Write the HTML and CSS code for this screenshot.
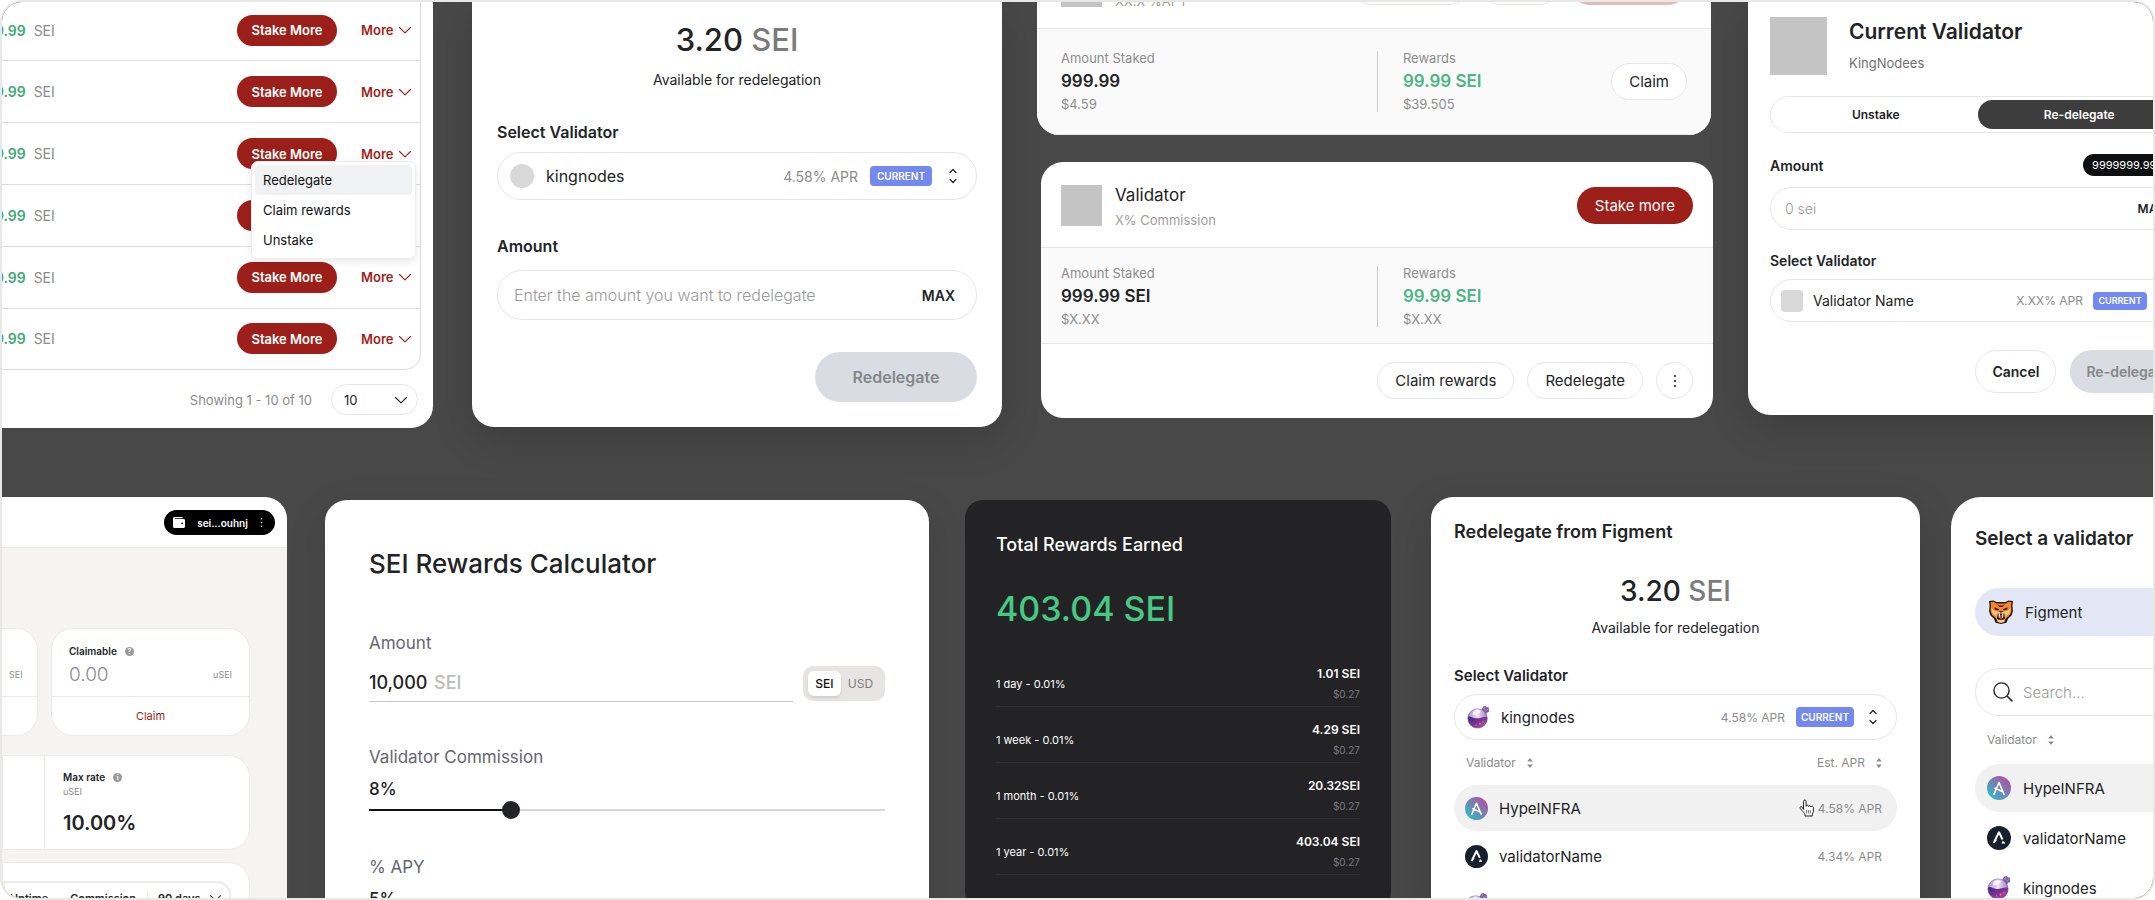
FILE: index.html
```html
<!DOCTYPE html>
<html lang="en">
<head>
<meta charset="utf-8">
<title>SEI staking components</title>
<link rel="stylesheet" href="styles.css">
</head>
<body>
<svg class="sprite" aria-hidden="true">
  <defs>
    <linearGradient id="g-hype" x1="0" y1="1" x2="1" y2="0"><stop offset=".1" stop-color="#2fbcc8"/><stop offset="1" stop-color="#c43f98"/></linearGradient>
    <linearGradient id="g-glass" x1="0" y1="0" x2="1" y2="0"><stop offset="0" stop-color="#a78bc4"/><stop offset=".5" stop-color="#efe6f4"/><stop offset="1" stop-color="#9a7bb8"/></linearGradient>
    <linearGradient id="g-liquid" x1="0" y1="0" x2="1" y2="1"><stop offset="0" stop-color="#3c2a86"/><stop offset=".5" stop-color="#7d3293"/><stop offset="1" stop-color="#cf4f8f"/></linearGradient>
  </defs>
  <symbol id="chevron" viewBox="0 0 12 8"><path d="M.5 1.500 6 6.800l5.500-5.300" fill="none" stroke="currentColor" stroke-width="1.100" stroke-linecap="round" stroke-linejoin="round"/></symbol>
  <symbol id="updown" viewBox="0 0 8 16"><path d="M1 4.500 4 1.500l3 3M1 11.500l3 3 3-3" fill="none" stroke="currentColor" stroke-width="1.200" stroke-linecap="round" stroke-linejoin="round"/></symbol>
  <symbol id="sort" viewBox="0 0 6 10"><path d="M3 0 5.800 3.400H.2zM3 10 .2 6.600h5.600z" fill="currentColor"/></symbol>
  <symbol id="dots" viewBox="0 0 4 14"><g fill="currentColor"><circle cx="2" cy="2" r="1.100"/><circle cx="2" cy="7" r="1.100"/><circle cx="2" cy="12" r="1.100"/></g></symbol>
  <symbol id="wallet" viewBox="0 0 12 11"><path d="M1.600 0h8v1.200H1.800v.7h8.800A1.400 1.400 0 0 1 12 3.300v6.200A1.400 1.400 0 0 1 10.600 11H1.500A1.500 1.500 0 0 1 0 9.500v-8A1.500 1.500 0 0 1 1.600 0z" fill="#fff"/><circle cx="9.100" cy="6.300" r=".9" fill="#000"/></symbol>
  <symbol id="kingnodes" viewBox="0 0 24 24">
    <path d="m15.500 7 3-3.500" stroke="#6b4a8f" stroke-width="3"/>
    <path d="m17 .6 2.700-.5 1.100 1.300 2.200.2-.2 2.200.7 1.800-2.200 1.200-1.400 1.600-2.600-1.600-2.100-1.800.4-2z" fill="#7c58a5"/>
    <path d="m17.200 2.300 3.500 2.500m-1.800-4-1 2.500m4.300-.2-2 1.900" stroke="#b99ad3" stroke-width=".8"/>
    <circle cx="11" cy="13" r="10.300" fill="url(#g-glass)"/>
    <path d="M1.200 11.300c2.800-1.200 4.600 1.500 8.500 1.600 4 .2 7-2.200 11.300-1.200a10 10 0 1 1-19.800-.4z" fill="url(#g-liquid)"/>
    <path d="M6.500 6.200c2-2 5.500-2.600 7.800-1-1.300 3.200-5.500 4.500-8.500 4z" fill="#fff" opacity=".7"/>
    <g fill="#ef80b0"><circle cx="13.500" cy="18.500" r=".9"/><circle cx="16.800" cy="16.700" r=".7"/><circle cx="9.500" cy="20" r=".7"/></g>
    <circle cx="11" cy="13" r="10.100" fill="none" stroke="#6f4b94" stroke-width=".5"/>
  </symbol>
  <symbol id="hype" viewBox="0 0 24 24"><circle cx="12" cy="12" r="12" fill="url(#g-hype)"/><path d="M7 18.300 12 6.500l5 11.800M8.200 12.200l7 3.300" fill="none" stroke="#fff" stroke-width="1.600" stroke-linecap="round" stroke-linejoin="round"/></symbol>
  <symbol id="dark" viewBox="0 0 24 24"><circle cx="12" cy="12" r="12" fill="#19202d"/><path d="M6.800 16.800 12 6.300l3.500 7.200" fill="none" stroke="#fff" stroke-width="2" stroke-linejoin="round"/><path d="M6.800 16.800 9.500 14M15.500 15.200l2.300 1.900h-3" fill="#fff" stroke="#fff" stroke-width="1"/></symbol>
  <symbol id="tiger" viewBox="0 0 24 24">
    <path d="M0 1 4.500.5 7.500 2h9l3-1.500L24 1l-.6 5 .6 5-1.500 4.500-3.500 3.200-1.500 4-5.500 1.300-5.500-1.300-1.500-4-3.500-3.200L0 11l.6-5z" fill="#26180f"/>
    <path d="M1.500 2.300 4.500 1.800l2.600 1.700h9.800l2.600-1.700 3 .5-.5 4 .5 4.500-1.400 4-4 3.500H6.900l-4-3.500-1.400-4 .5-4.500z" fill="#f5842c"/>
    <path d="m2 8 3.800 3 3.200.5L7 16l-3.500-2.500zM22 8l-3.800 3-3.200.5 2 4.500 3.500-2.500zM7.200 18l1.300-6h7l1.300 6-1.500 4-3.300.9L8.700 22z" fill="#f8c878"/>
    <path d="M5.500 7.300 10 9.200l-.7 1.300-3.600-1zM18.500 7.300 14 9.200l.7 1.300 3.600-1zM8 4.300l3 1.200h2l3-1.200-2.800 2.700h-2.400zM10 11h4l-1.200 1.600h-1.600z" fill="#3a1d10"/>
    <path d="M8.700 13.500h6.600l.7 5.500-2 .8h-4l-2-.8z" fill="#321010"/>
    <path d="M9.500 13.500h1.700l-.6 4.500h-.7zM14.500 13.500h-1.700l.6 4.500h.7z" fill="#fff"/><path d="M11 15h2v4h-2z" fill="#c83a35"/>
  </symbol>
  <symbol id="search" viewBox="0 0 20 20"><circle cx="8.500" cy="8.500" r="7.600" fill="none" stroke="currentColor" stroke-width="1.400"/><path d="m14 14 5.400 5.400" stroke="currentColor" stroke-width="1.500"/></symbol>
  <symbol id="hand" viewBox="0 0 16 18"><path d="M4.600 10.500V2.300a1.250 1.250 0 0 1 2.500 0v5c0-1.500 2.400-1.500 2.500.2.300-1.300 2.300-1.100 2.400.5.400-1.200 2.300-1 2.400.5v3.700c0 1.200-.9 2-1.100 3.300v1.500H6v-1.300c-.3-1.600-2-2.800-3-4.200L1.200 9.300c-.8-1.300.9-2.100 1.900-1.100z" fill="#fff" stroke="#222" stroke-width="1" stroke-linejoin="round"/><path d="M7.600 11v3.500M9.400 11v3.500M11.200 11v3.500" stroke="#555" stroke-width=".8"/></symbol>
</svg>

<main class="frame">
  <div class="row row-top">

    <section class="card stakes">
      <div class="stakes-table">
        <table>
          <tbody>
            <tr><td><b>999.99</b> <span>SEI</span></td><td><div class="actions"><button class="btn-red">Stake More</button><button class="more">More <svg><use href="#chevron"/></svg></button></div></td></tr>
            <tr><td><b>999.99</b> <span>SEI</span></td><td><div class="actions"><button class="btn-red">Stake More</button><button class="more">More <svg><use href="#chevron"/></svg></button></div></td></tr>
            <tr><td><b>999.99</b> <span>SEI</span></td><td><div class="actions"><button class="btn-red">Stake More</button><button class="more">More <svg><use href="#chevron"/></svg></button>
              <div class="menu" role="menu"><button class="active" role="menuitem">Redelegate</button><button role="menuitem">Claim rewards</button><button role="menuitem">Unstake</button></div></div></td></tr>
            <tr><td><b>999.99</b> <span>SEI</span></td><td><div class="actions"><button class="btn-red" aria-label="Stake More"></button><button class="more" aria-label="More"></button></div></td></tr>
            <tr><td><b>999.99</b> <span>SEI</span></td><td><div class="actions"><button class="btn-red">Stake More</button><button class="more">More <svg><use href="#chevron"/></svg></button></div></td></tr>
            <tr><td><b>999.99</b> <span>SEI</span></td><td><div class="actions"><button class="btn-red">Stake More</button><button class="more">More <svg><use href="#chevron"/></svg></button></div></td></tr>
          </tbody>
        </table>
      </div>
      <div class="pager">
        <label for="page-size">Showing 1 - 10 of 10</label>
        <span class="select-wrap"><select id="page-size"><option>10</option><option>20</option></select><svg><use href="#chevron"/></svg></span>
      </div>
    </section>

    <section class="card redelegate">
      <p class="balance">3.20 <span>SEI</span></p>
      <p class="balance-note">Available for redelegation</p>
      <h3>Select Validator</h3>
      <button class="picker"><i class="dot"></i><span class="name">kingnodes</span><span class="apr">4.58% APR</span><span class="badge">CURRENT</span><svg class="updown"><use href="#updown"/></svg></button>
      <label class="label" for="amount-a">Amount</label>
      <div class="field"><input id="amount-a" type="text" placeholder="Enter the amount you want to redelegate"><button>MAX</button></div>
      <button class="btn-disabled" disabled>Redelegate</button>
    </section>

    <div class="positions">
      <section class="card position position-a">
        <header>
          <i class="avatar"></i>
          <div><h4>Validator</h4><p>XX.X %APY</p></div>
          <div class="buttons"><button class="btn-line">Redelegate</button><button class="btn-line">Claim</button><button class="btn-red faded">Stake more</button></div>
        </header>
        <div class="stats">
          <dl><dt>Amount Staked</dt><dd class="value">999.99</dd><dd>$4.59</dd></dl>
          <dl class="rewards"><dt>Rewards</dt><dd class="value">99.99 SEI</dd><dd>$39.505</dd></dl>
          <button class="btn-line">Claim</button>
        </div>
      </section>
      <section class="card position position-b">
        <header>
          <i class="avatar"></i>
          <div><h4>Validator</h4><p>X% Commission</p></div>
          <div class="buttons"><button class="btn-red">Stake more</button></div>
        </header>
        <div class="stats">
          <dl><dt>Amount Staked</dt><dd class="value">999.99 SEI</dd><dd>$X.XX</dd></dl>
          <dl class="rewards"><dt>Rewards</dt><dd class="value">99.99 SEI</dd><dd>$X.XX</dd></dl>
        </div>
        <footer><button class="btn-line">Claim rewards</button><button class="btn-line">Redelegate</button><button class="btn-line round" aria-label="More options"><svg><use href="#dots"/></svg></button></footer>
      </section>
    </div>

    <section class="card manage">
      <header><i class="avatar"></i><div><h2>Current Validator</h2><p>KingNodees</p></div></header>
      <div class="tabs" role="tablist"><button role="tab">Unstake</button><button role="tab" class="active" aria-selected="true">Re-delegate</button></div>
      <div class="label-row"><label for="amount-b">Amount</label><span class="pill">9999999.99 SEI</span></div>
      <div class="field"><input id="amount-b" type="text" placeholder="0 sei"><button>MAX</button></div>
      <h3>Select Validator</h3>
      <button class="picker"><i class="dot"></i><span class="name">Validator Name</span><span class="apr">X.XX% APR</span><span class="badge">CURRENT</span><svg class="updown"><use href="#updown"/></svg></button>
      <div class="buttons"><button class="btn-line">Cancel</button><button class="btn-disabled" disabled>Re-delegate</button></div>
    </section>
  </div>

  <div class="row row-bottom">

    <section class="card dashboard">
      <header><button class="wallet"><svg class="wallet-icon"><use href="#wallet"/></svg><span>sei...ouhnj</span><svg class="dots"><use href="#dots"/></svg></button></header>
      <div class="dash-body">
        <div class="tiles">
          <article class="tile"><div class="tile-top"><div class="tile-value"><span>SEI</span></div></div><div class="tile-foot"></div></article>
          <article class="tile tile-b"><div class="tile-top"><h5>Claimable <i class="hint">?</i></h5><div class="tile-value"><strong>0.00</strong><span>uSEI</span></div></div><div class="tile-foot"><a href="#claim">Claim</a></div></article>
        </div>
        <div class="rates"><div></div><div class="rate"><h5>Max rate <i class="hint">i</i></h5><p>uSEI</p><strong>10.00%</strong></div></div>
        <div class="chart"><div class="chart-bar"><button>Uptime</button><button>Commission</button><button class="range">90 days <svg><use href="#chevron"/></svg></button></div></div>
      </div>
    </section>

    <section class="card calculator">
      <h2>SEI Rewards Calculator</h2>
      <label for="calc-amount">Amount</label>
      <div class="calc-amount">
        <div class="underline"><input id="calc-amount" type="text" value="10,000"><span>SEI</span></div>
        <div class="toggle"><button class="active">SEI</button><button>USD</button></div>
      </div>
      <label for="commission">Validator Commission</label>
      <output for="commission">8%</output>
      <input id="commission" class="slider" type="range" min="0" max="30" value="8">
      <label class="apy" for="apy">% APY</label>
      <output id="apy">5%</output>
    </section>

    <section class="card earned">
      <h2>Total Rewards Earned</h2>
      <p class="total">403.04 SEI</p>
      <ul>
        <li><span>1 day - 0.01%</span><div><b>1.01 SEI</b><small>$0.27</small></div></li>
        <li><span>1 week - 0.01%</span><div><b>4.29 SEI</b><small>$0.27</small></div></li>
        <li><span>1 month - 0.01%</span><div><b>20.32SEI</b><small>$0.27</small></div></li>
        <li><span>1 year - 0.01%</span><div><b>403.04 SEI</b><small>$0.27</small></div></li>
      </ul>
    </section>

    <section class="card redelegate from-figment">
      <h2>Redelegate from Figment</h2>
      <p class="balance">3.20 <span>SEI</span></p>
      <p class="balance-note">Available for redelegation</p>
      <h3>Select Validator</h3>
      <button class="picker"><svg class="logo"><use href="#kingnodes"/></svg><span class="name">kingnodes</span><span class="apr">4.58% APR</span><span class="badge">CURRENT</span><svg class="updown"><use href="#updown"/></svg></button>
      <div class="list-head"><button>Validator <svg><use href="#sort"/></svg></button><button>Est. APR <svg><use href="#sort"/></svg></button></div>
      <ul class="options">
        <li class="active"><svg class="logo"><use href="#hype"/></svg><span class="name">HypeINFRA</span><svg class="cursor"><use href="#hand"/></svg><span class="apr">4.58% APR</span></li>
        <li><svg class="logo"><use href="#dark"/></svg><span class="name">validatorName</span><span class="apr">4.34% APR</span></li>
        <li><svg class="logo"><use href="#kingnodes"/></svg></li>
      </ul>
    </section>

    <section class="card chooser">
      <h2>Select a validator</h2>
      <div class="chosen"><svg class="logo"><use href="#tiger"/></svg><span>Figment</span></div>
      <div class="search"><svg><use href="#search"/></svg><input type="search" aria-label="Search validators" placeholder="Search..."></div>
      <div class="list-head"><button>Validator <svg><use href="#sort"/></svg></button></div>
      <ul class="options">
        <li class="active"><svg class="logo"><use href="#hype"/></svg><span class="name">HypeINFRA</span></li>
        <li><svg class="logo"><use href="#dark"/></svg><span class="name">validatorName</span></li>
        <li><svg class="logo"><use href="#kingnodes"/></svg><span class="name">kingnodes</span></li>
      </ul>
    </section>
  </div>
</main>
</body>
</html>
```
FILE: styles.css
```css
:root {
  --ink: #222325;
  --grey: #8c8c8c;
  --line: #e7e7e6;
  --red: #9d1f1a;
  --green: #4cb582;
  --blue: #7389ef;
}

* { box-sizing: border-box; margin: 0; padding: 0; }

body {
  height: 100vh;
  overflow: hidden;
  background: #fff;
  color: var(--ink);
  font-family: Inter, "Liberation Sans", sans-serif;
}

button, input, select { font: inherit; color: inherit; background: none; border: 0; outline: 0; }
button { cursor: pointer; white-space: nowrap; }
input { min-width: 0; }
input::placeholder { color: #999; opacity: 1; font-weight: 300; }
ul { list-style: none; }
a { text-decoration: none; color: inherit; }
.sprite { position: absolute; width: 0; height: 0; }

.frame {
  height: 100vh;
  overflow: hidden;
  border: 2px solid #e8e8e4;
  border-radius: 22px;
  background: #484848;
}

.row { display: flex; align-items: flex-start; }
.row-top { width: calc(100% + 54px); height: 495px; }
.row-bottom { width: calc(100% + 228px); height: 420px; }
.card { background: #fff; border-radius: 22px; }
.row-top .card { border-top-left-radius: 0; border-top-right-radius: 0; }
.row-bottom .card { border-bottom-left-radius: 0; border-bottom-right-radius: 0; }

.btn-red {
  height: 37px;
  padding: 0 18px;
  border-radius: 19px;
  background: var(--red);
  color: #fff;
}
.btn-line {
  height: 37px;
  padding: 0 17px;
  border: 1px solid var(--line);
  border-radius: 22px;
  background: #fff;
}
.btn-disabled { border-radius: 26px; background: #d9dce3; color: #85878a; font-weight: 600; }
.badge {
  border-radius: 4px;
  background: var(--blue);
  color: #fff;
  font-weight: 600;
  text-align: center;
}

/* Stakes table */
.stakes { flex: 1 1 431px; min-width: 0; padding-bottom: 13px; border-bottom-left-radius: 0; }
.stakes-table {
  margin: -3px 12px 0 -60px;
  border: 1px solid #dcdcdc;
  border-radius: 0 0 16px 0;
}
.stakes table { width: 100%; height: 369px; border-collapse: collapse; }
.stakes tr + tr td { border-top: 1px solid #dcdcdc; }
.stakes td { font-size: 14px; white-space: nowrap; }
.stakes td:first-child { padding-left: 34px; }
.stakes td b { margin-right: 4px; color: #3fa974; font-weight: 600; }
.stakes td span { color: var(--grey); }
.actions { position: relative; display: flex; justify-content: flex-end; align-items: center; gap: 24px; padding-right: 8px; font-size: 13px; font-weight: 600; }
.actions .btn-red { width: 100px; height: 31px; padding: 0; }
.more { display: flex; align-items: center; gap: 6px; min-width: 51px; color: var(--red); }
.more svg { width: 12px; height: 8px; }
.menu {
  position: absolute;
  z-index: 1;
  top: 23px;
  right: 4px;
  display: flex;
  flex-direction: column;
  width: 165px;
  padding: 3px;
  border: 1px solid #eee;
  border-radius: 7px;
  background: #fff;
  box-shadow: 0 3px 8px rgba(0, 0, 0, .09);
}
.menu button { height: 30px; padding: 0 8px; border-radius: 4px; text-align: left; font-size: 13px; font-weight: 400; color: #111; }
.menu .active { background: #f1f2f4; }
.pager { display: flex; justify-content: flex-end; align-items: center; gap: 19px; margin-top: 14px; padding-right: 15px; font-size: 13px; color: var(--grey); }
.select-wrap { position: relative; color: var(--ink); }
.select-wrap select { appearance: none; width: 87px; height: 31px; padding: 0 12px; border: 1px solid var(--line); border-radius: 16px; }
.select-wrap svg { position: absolute; top: 12px; right: 11px; width: 12px; height: 8px; pointer-events: none; }

/* Redelegate forms */
.redelegate { flex: 1 1 530px; min-width: 0; display: flex; flex-direction: column; margin-left: 39px; padding: 18px 25px 25px; box-shadow: 0 12px 40px rgba(0, 0, 0, .16); }
.redelegate > * { flex-shrink: 0; }
.balance { line-height: 40px; font-size: 31px; font-weight: 500; text-align: center; }
.balance span { color: #7b7b7b; }
.balance-note { margin-top: 10px; line-height: 20px; font-size: 14px; text-align: center; }
.redelegate h3, .label { line-height: 20px; font-size: 16px; font-weight: 600; }
.redelegate h3 { margin-top: 32px; }
.label { margin-top: 36px; }
.picker { display: flex; align-items: center; width: 100%; height: 48px; margin-top: 10px; padding: 0 19px 0 12px; border: 1px solid var(--line); border-radius: 24px; text-align: left; }
.picker .dot { width: 24px; height: 24px; border-radius: 50%; background: #d8d8d8; }
.name { margin-left: 12px; font-size: 15px; }
.picker .name { flex: 1; font-size: 16px; }
.apr { color: var(--grey); font-size: 14px; }
.redelegate .badge { width: 62px; margin-left: 12px; line-height: 20px; font-size: 10px; }
.updown { width: 8px; height: 16px; margin-left: 17px; }
.field { display: flex; align-items: center; height: 50px; margin-top: 14px; padding: 0 21px 0 16px; border: 1px solid var(--line); border-radius: 25px; font-size: 16px; }
.field input { flex: 1; }
.field button { font-size: 14px; font-weight: 600; }
.redelegate .btn-disabled { align-self: flex-end; width: 162px; height: 50px; margin-top: 32px; font-size: 16px; }

/* Staked positions */
.positions { flex: 1 1 676px; min-width: 0; display: flex; flex-direction: column; gap: 27px; margin: -58px 0 0 35px; }
.position { overflow: hidden; font-size: 15px; }
.position-a { margin-right: 2px; }
.position-b { margin-left: 4px; }
.row-top .position-b { border-radius: 22px; }
.position header { display: flex; align-items: center; gap: 13px; padding: 23px 20px 21px; }
.position-a header, .position-a .stats { padding-left: 24px; padding-right: 24px; }
.position-a header { padding-top: 22px; }
.position .avatar { width: 41px; height: 41px; background: #c4c4c4; }
.position h4 { line-height: 22px; font-size: 17px; font-weight: 400; }
.position header p { margin-top: 4px; line-height: 20px; font-size: 13px; color: #a09d9a; }
.position header > div:nth-child(2) { flex: 1; margin: -2px 0 -4px; }
.position .buttons { display: flex; gap: 13px; }
.faded { opacity: .3; }
.stats { display: flex; align-items: center; padding: 14px 20px 12px; border: solid var(--line); border-width: 1px 0; background: #fafafa; }
.position-a .stats { padding-top: 18px; padding-bottom: 18px; }
.stats dl { flex: 1 1 317px; line-height: 23px; font-size: 13px; color: var(--grey); }
.stats .value { font-size: 17px; font-weight: 600; color: var(--ink); }
.stats .rewards { padding-left: 26px; background: linear-gradient(#c9c9c9, #c9c9c9) 0 4px / 1px 61px no-repeat; }
.stats .rewards .value { color: var(--green); }
.position-a .rewards { flex-basis: 235px; }
.position footer { display: flex; justify-content: flex-end; gap: 13px; padding: 18px 20px 19px; }
.round { display: grid; place-items: center; width: 37px; padding: 0; }
.round svg { width: 4px; height: 14px; }

/* Current validator */
.manage { flex: 0 0 459px; margin-left: 35px; padding: 15px 22px 22px; box-shadow: 0 12px 40px rgba(0, 0, 0, .16); }
.manage header { display: flex; gap: 22px; }
.manage .avatar { width: 57px; height: 58px; background: #c4c4c4; }
.manage h2 { line-height: 30px; font-size: 21px; font-weight: 600; }
.manage header p { margin-top: 6px; line-height: 20px; font-size: 13px; color: #707070; }
.tabs { display: flex; height: 37px; margin-top: 21px; padding: 3px; border: 1px solid var(--line); border-radius: 19px; font-size: 12px; font-weight: 600; }
.tabs button { flex: 1; border-radius: 15px; }
.tabs .active { background: #3d3d3d; color: #fff; }
.label-row { display: flex; justify-content: space-between; align-items: center; margin-top: 21px; font-size: 14px; font-weight: 600; }
.pill { padding: 0 9px; border-radius: 11px; background: #0e0f10; color: #fff; line-height: 22px; font-size: 11px; font-weight: 400; }
.manage .field { height: 43px; margin-top: 11px; padding: 0 18px 0 14px; font-size: 14px; }
.manage .field button { font-size: 12px; }
.manage h3 { margin-top: 21px; line-height: 20px; font-size: 14px; font-weight: 600; }
.manage .picker { height: 43px; margin-top: 8px; padding: 0 15px 0 10px; }
.manage .dot { width: 22px; height: 22px; border-radius: 4px; }
.manage .name { margin-left: 10px; font-size: 14px; }
.manage .apr { font-size: 12px; }
.manage .badge { width: 54px; margin-left: 10px; line-height: 18px; font-size: 9px; }
.manage .updown { margin-left: 14px; }
.manage > .buttons { display: flex; justify-content: flex-end; gap: 14px; margin-top: 28px; font-size: 14px; font-weight: 600; }
.manage > .buttons button { height: 43px; padding: 0 16px; }

/* Dashboard */
.dashboard { flex: 1 1 285px; min-width: 0; height: 100%; overflow: hidden; border-top-left-radius: 0; }
.dashboard header { display: flex; justify-content: flex-end; padding: 13px 12px 12px; border-bottom: 1px solid #ebebe9; }
.wallet { display: flex; align-items: center; height: 25px; width: 111px; padding: 0 12px 0 9px; border-radius: 13px; background: #000; color: #fff; font-size: 10px; font-weight: 600; }
.wallet span { flex: 1; text-align: center; }
.wallet-icon { width: 12px; height: 11px; }
.wallet .dots { width: 3px; height: 11px; }
.dash-body { height: 100%; padding: 80px 37px 0 0; background: #f5f4f2; }
.tiles { display: flex; gap: 13px; }
.tile { flex: 0 0 36px; display: flex; flex-direction: column; height: 108px; border: 1px solid #ebebe9; border-left: 0; border-radius: 0 22px 22px 0; background: #fff; color: var(--grey); font-size: 9px; }
.tile-b { flex: 1; border-left: 1px solid #ebebe9; border-radius: 22px; }
.tile-top { flex: 1; display: flex; flex-direction: column; justify-content: flex-end; padding: 0 17px 8px; border-bottom: 1px solid #ebebe9; }
.tile:first-child .tile-top { padding-left: 7px; padding-right: 14px; }
.tile-value { display: flex; justify-content: space-between; align-items: center; line-height: 26px; }
.tile-value strong { font-size: 19px; font-weight: 300; }
.tile-foot { display: grid; place-items: center; height: 38px; color: var(--red); font-size: 11px; }
.dash-body h5 { display: flex; align-items: center; gap: 8px; line-height: 22px; color: var(--ink); font-size: 10px; font-weight: 600; }
.hint { width: 9px; height: 9px; border-radius: 50%; background: #999; color: #fff; font-size: 7px; font-style: normal; line-height: 9px; text-align: center; }
.rates { display: flex; height: 95px; margin-top: 19px; border: 1px solid #ebebe9; border-radius: 0 22px 22px 0; background: #fff; }
.rates > div:first-child { width: 41px; }
.rate { flex: 1; padding: 10px 18px; border-left: 1px solid #ebebe9; }
.rate p { line-height: 8px; font-size: 9px; color: var(--grey); }
.rate strong { display: block; margin-top: 12px; line-height: 30px; font-size: 20px; font-weight: 600; }
.chart { margin-top: 12px; padding: 18px 18px 0 0; height: 80px; border: 1px solid #ebebe9; border-radius: 0 22px 0 0; background: #fff; }
.chart-bar { display: flex; align-items: center; gap: 22px; height: 34px; padding-left: 5px; border: 2px solid #ebebe9; border-radius: 0 14px 14px 0; font-size: 11px; font-weight: 600; }
.chart-bar .range { display: flex; align-items: center; gap: 9px; margin-left: -11px; padding-left: 10px; border-left: 1px solid #ebebe9; }
.chart-bar svg { width: 11px; height: 8px; }

/* Calculator */
.calculator { flex: 1 1 604px; min-width: 0; height: 420px; display: flex; flex-direction: column; margin: 3px 0 0 38px; padding: 44px 44px 0; box-shadow: 0 12px 40px rgba(0, 0, 0, .1); }
.calculator > * { flex-shrink: 0; }
.calculator h2 { line-height: 40px; font-size: 26px; font-weight: 500; }
.calculator label { margin-top: 47px; line-height: 24px; font-size: 17px; color: #65656f; }
.calc-amount { display: flex; align-items: center; gap: 10px; height: 36px; margin-top: 10px; }
.underline { flex: 1; display: flex; align-items: center; height: 38px; border-bottom: 1px solid #c9c9c9; font-size: 18px; font-weight: 500; }
.underline input { width: 65px; }
.underline span { color: #bcbcbc; }
.toggle { display: flex; width: 82px; padding: 5px; border-radius: 10px; background: #e7e5e3; font-size: 12px; }
.toggle button { flex: 1; height: 25px; border-radius: 6px; color: #7f7d7a; }
.toggle .active { flex: 0 0 33px; background: #fff; color: #111; font-weight: 500; box-shadow: 0 2px 3px rgba(0, 0, 0, .1); }
.calculator label[for="commission"] { margin-top: 44px; }
.calculator output { margin-top: 9px; line-height: 22px; font-size: 17px; font-weight: 500; }
.calculator .apy { margin-top: 35px; }
.slider { appearance: none; width: 100%; height: 20px; background: linear-gradient(90deg, #111 27%, #d9d7d6 27%) center / 100% 2px no-repeat; }
.slider::-webkit-slider-thumb { appearance: none; width: 18px; height: 18px; border-radius: 50%; background: var(--ink); }

/* Rewards earned */
.earned { flex: 1 1 426px; min-width: 0; height: 410px; margin: 3px 0 0 36px; padding: 30px 31px 0; background: #232325; color: #fff; }
.row-bottom .earned { border-radius: 18px; }
.earned h2 { line-height: 30px; font-size: 18px; font-weight: 500; }
.total { margin-top: 27px; line-height: 44px; font-size: 34px; font-weight: 500; color: #48c885; }
.earned ul { margin-top: 20px; }
.earned li { display: flex; justify-content: space-between; align-items: center; height: 56px; padding-top: 10px; border-bottom: 1px solid #303033; font-size: 11px; }
.earned li div { display: flex; flex-direction: column; text-align: right; line-height: 20px; }
.earned b { font-size: 12px; font-weight: 600; }
.earned small { font-size: 10px; color: #77777a; }

/* Redelegate with options */
.from-figment { flex: 1 1 489px; height: 420px; margin-left: 40px; padding: 20px 23px 0; }
.from-figment h2 { line-height: 30px; font-size: 18px; font-weight: 600; }
.from-figment .balance { margin-top: 24px; font-size: 28px; }
.from-figment .balance-note { margin-top: 7px; font-size: 14px; }
.from-figment h3 { margin-top: 28px; font-size: 15px; }
.from-figment .picker { height: 46px; margin-top: 8px; }
.logo { width: 23px; height: 23px; flex: none; }
.from-figment .name { margin-left: 11px; font-size: 15px; }
.from-figment .apr { font-size: 12px; }
.from-figment .badge { width: 58px; margin-left: 11px; }
.from-figment .updown { margin-left: 15px; }
.list-head { display: flex; justify-content: space-between; margin-top: 13px; padding: 0 15px 0 12px; line-height: 20px; font-size: 12px; color: var(--grey); }
.list-head button { display: flex; align-items: center; gap: 11px; }
.list-head svg { width: 6px; height: 10px; }
.options { display: flex; flex-direction: column; gap: 2px; margin-top: 12px; }
.options li { flex: none; display: flex; align-items: center; height: 46px; padding: 0 15px 0 11px; border-radius: 24px; }
.options .active { background: #f1f1f1; }
.options .name { flex: 1; }
.cursor { width: 16px; height: 18px; margin-right: 3px; }

/* Validator chooser */
.chooser { flex: 0 0 430px; height: 420px; margin-left: 31px; padding: 27px 24px 0; }
.row-bottom .chooser { border-radius: 30px 30px 0 0; }
.chooser h2 { line-height: 30px; font-size: 19px; font-weight: 600; }
.chosen, .search { display: flex; align-items: center; height: 48px; border-radius: 24px; font-size: 15px; }
.chosen { gap: 12px; margin-top: 34px; padding-left: 14px; background: #e3e7f5; }
.chooser .logo { width: 24px; height: 24px; }
.search { gap: 10px; margin-top: 32px; padding-left: 17px; border: 1px solid var(--line); }
.search svg { width: 20px; height: 20px; }
.chooser .list-head { margin-top: 14px; }
.chooser .options { margin-top: 14px; }
.chooser .options li { height: 48px; padding-left: 12px; }
.chooser .name { margin-left: 12px; }
```
